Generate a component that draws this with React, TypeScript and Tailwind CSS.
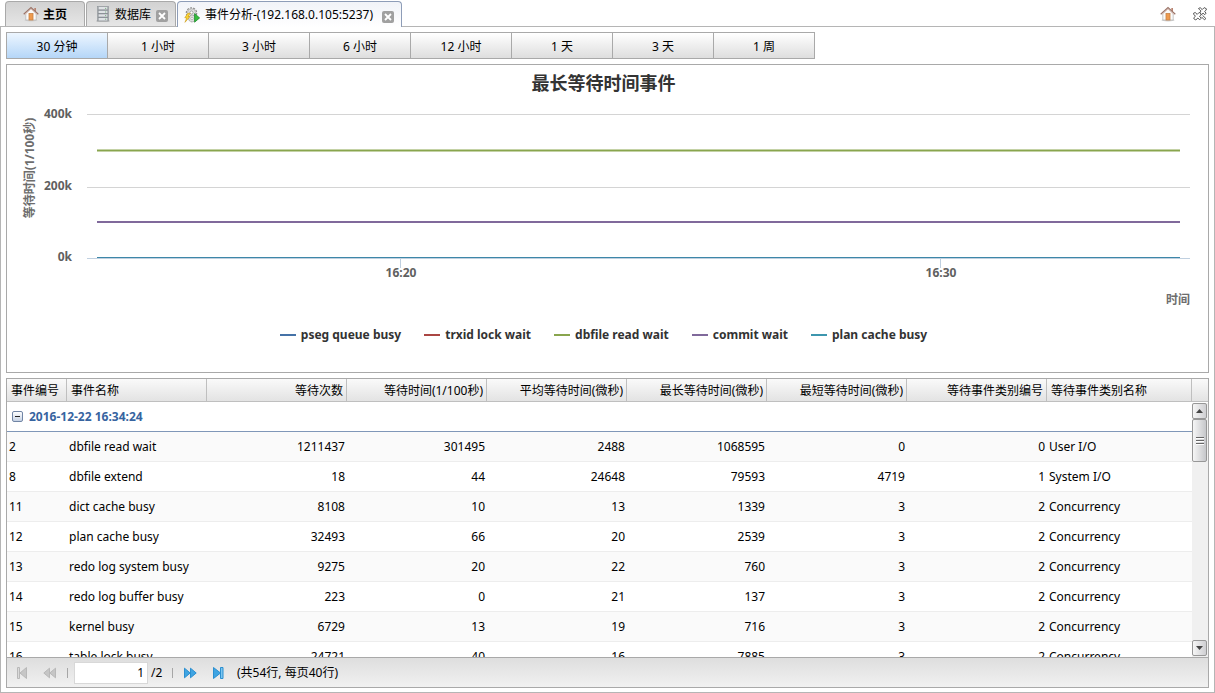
import React from "react";

type Column = { title: string; width: string; align: string };

const columns: Column[] = [
  { title: "事件编号", width: "", align: "text-left" },
  { title: "事件名称", width: "w-[140px]", align: "text-left" },
  { title: "等待次数", width: "w-[140px]", align: "text-right" },
  { title: "等待时间(1/100秒)", width: "w-[140px]", align: "text-right" },
  { title: "平均等待时间(微秒)", width: "w-[140px]", align: "text-right" },
  { title: "最长等待时间(微秒)", width: "w-[140px]", align: "text-right" },
  { title: "最短等待时间(微秒)", width: "w-[140px]", align: "text-right" },
  { title: "等待事件类别编号", width: "w-[140px]", align: "text-right" },
  { title: "等待事件类别名称", width: "w-[145px]", align: "text-left" },
];

const rows: string[][] = [
  ["2", "dbfile read wait", "1211437", "301495", "2488", "1068595", "0", "0", "User I/O"],
  ["8", "dbfile extend", "18", "44", "24648", "79593", "4719", "1", "System I/O"],
  ["11", "dict cache busy", "8108", "10", "13", "1339", "3", "2", "Concurrency"],
  ["12", "plan cache busy", "32493", "66", "20", "2539", "3", "2", "Concurrency"],
  ["13", "redo log system busy", "9275", "20", "22", "760", "3", "2", "Concurrency"],
  ["14", "redo log buffer busy", "223", "0", "21", "137", "3", "2", "Concurrency"],
  ["15", "kernel busy", "6729", "13", "19", "716", "3", "2", "Concurrency"],
  ["16", "table lock busy", "24721", "40", "16", "7885", "3", "2", "Concurrency"],
];

const ranges = ["30 分钟", "1 小时", "3 小时", "6 小时", "12 小时", "1 天", "3 天", "1 周"];

const series = [
  { name: "pseg queue busy", color: "bg-[#4572a7]" },
  { name: "trxid lock wait", color: "bg-[#aa4643]" },
  { name: "dbfile read wait", color: "bg-[#89a54e]" },
  { name: "commit wait", color: "bg-[#80699b]" },
  { name: "plan cache busy", color: "bg-[#3d96ae]" },
];

function HomeIcon() {
  return (
    <svg width="16" height="16" viewBox="0 0 16 16" aria-hidden="true">
      <ellipse cx="8" cy="14.2" rx="6.5" ry="1.2" fill="#d0d0d0" />
      <path d="M11.3 2h1.7v4l-1.7-1.6z" fill="#b98370" />
      <path d="M2.8 7.5 8 2.8l5.2 4.7V14H2.8z" fill="#fafafa" stroke="#b9b9b9" strokeWidth=".8" />
      <path d="M.7 8.2 8 1.5l7.3 6.7" fill="none" stroke="#9b7468" strokeWidth="1.2" />
      <path d="M2 8.4 8 3l6 5.4" fill="none" stroke="#e2c1b6" strokeWidth=".8" />
      <rect x="6" y="7.5" width="4" height="6.5" fill="#ef9a4e" stroke="#c98347" strokeWidth=".8" />
    </svg>
  );
}

function DatabaseIcon() {
  return (
    <svg width="16" height="16" viewBox="0 0 16 16" aria-hidden="true">
      <ellipse cx="8" cy="15" rx="7" ry="1" fill="#bdbdbd" />
      <rect x="2.5" y=".5" width="11" height="14.5" fill="#b0b4b8" stroke="#92979c" strokeWidth=".7" />
      <g fill="#dfe2e5">
        <rect x="4" y="1" width="8" height="2.6" />
        <rect x="4" y="4.6" width="8" height="2.6" />
        <rect x="4" y="8.2" width="8" height="2.6" />
        <rect x="4" y="11.8" width="8" height="2.6" />
      </g>
      <path d="M3 4.1h10M3 7.7h10M3 11.3h10" stroke="#7c8389" strokeWidth=".9" />
      <path d="M10 2.4h1.2M10 6h1.2M10 9.6h1.2M10 13.2h1.2" stroke="#7fb686" />
    </svg>
  );
}

function AnalysisIcon() {
  return (
    <svg width="16" height="16" viewBox="0 0 16 16" aria-hidden="true">
      <circle cx="7.5" cy="6" r="5.2" fill="#d9d9d9" stroke="#8f8f8f" strokeWidth="1.2" strokeDasharray="2 1.2" />
      <circle cx="7.5" cy="6" r="4" fill="#e6e6e6" stroke="#a8a8a8" strokeWidth=".6" />
      <circle cx="7.5" cy="5.5" r="1.6" fill="#fff" stroke="#8d8d8d" strokeWidth=".8" />
      <circle cx="8" cy="11.5" r="3.4" fill="#ddd" stroke="#8f8f8f" strokeDasharray="1.4 .9" />
      <circle cx="8" cy="11.5" r="1.2" fill="#fff" stroke="#999" strokeWidth=".6" />
      <path d="M3.8 6.3.8 10.8h2L1 15.3l5-5.8H4L6.2 6.3z" fill="#ffd930" stroke="#cfa023" strokeWidth=".7" />
      <path d="M10.6 6.6v8.6l5-4.3z" fill="#35bd3c" stroke="#1c8a2b" strokeWidth=".8" />
    </svg>
  );
}

function CloseButton({ label }: { label: string }) {
  return (
    <button type="button" aria-label={label} className="mt-1 ml-px flex size-3 items-center justify-center rounded-xs bg-[#a0a0a0]">
      <svg width="8" height="8" viewBox="0 0 8 8" aria-hidden="true">
        <path d="m1 1 6 6M7 1 1 7" stroke="#fff" strokeWidth="1.8" />
      </svg>
    </button>
  );
}

function Chart() {
  return (
    <section className="flex h-[309px] shrink-0 flex-col border border-[#a9a9a9] bg-white">
      <h2 className="pt-1 pr-2 text-center text-lg leading-7 font-bold text-[#333]">最长等待时间事件</h2>
      <svg viewBox="0 0 1201 210" className="w-full" role="img" aria-label="最长等待时间事件" fontWeight="700" fontSize="12" fill="#606060">
        <g stroke="#d4d4d4" shapeRendering="crispEdges">
          <path d="M80 17.5h1103M80 90.5h1103" />
          <path d="M80 161.5h1103M393.5 162v9M933.5 162v9" stroke="#c0d0e0" />
        </g>
        <path d="M90 53.5h1083" stroke="#89a54e" strokeWidth="2" />
        <path d="M90 125h1083" stroke="#80699b" strokeWidth="2" />
        <path d="M90 160.5h1083" stroke="#3d87a8" />
        <g textAnchor="end">
          <text x="65" y="21">400k</text>
          <text x="65" y="93">200k</text>
          <text x="65" y="164">0k</text>
        </g>
        <g textAnchor="middle">
          <text x="394" y="180">16:20</text>
          <text x="934" y="180">16:30</text>
        </g>
        <text x="1183" y="207" textAnchor="end" fill="#6d6d6d">时间</text>
        <text transform="translate(27 71) rotate(-90)" textAnchor="middle" fill="#6d6d6d">
          等待时间(1/100秒)
        </text>
      </svg>
      <ul className="mt-4 flex justify-center gap-[23px] pr-2 leading-6 font-bold text-[#333]">
        {series.map((s) => (
          <li key={s.name} className="flex items-center gap-[5px] whitespace-nowrap">
            <span className={`h-0.5 w-4 ${s.color}`} />
            {s.name}
          </li>
        ))}
      </ul>
    </section>
  );
}

function ScrollBar() {
  const button =
    "flex h-4 shrink-0 items-center justify-center rounded-xs border border-[#979797] bg-linear-to-r from-[#f6f6f6] to-[#cfcfd2]";
  return (
    <div className="absolute top-6 right-0 bottom-0 flex w-4 flex-col bg-[#f0f0f0] pr-px pb-px">
      <button type="button" aria-label="向上滚动" className={button}>
        <svg width="7" height="4" viewBox="0 0 7 4" aria-hidden="true"><path d="M0 4 3.5 0 7 4z" fill="#444" /></svg>
      </button>
      <div className="flex h-[43px] flex-col items-center justify-center gap-px rounded-xs border border-[#979797] bg-linear-to-r from-[#f6f6f6] to-[#c6c7ca]">
        <span className="h-0.5 w-2 border-b border-white bg-[#666]" />
        <span className="h-0.5 w-2 border-b border-white bg-[#666]" />
        <span className="h-0.5 w-2 border-b border-white bg-[#666]" />
      </div>
      <div className="grow" />
      <button type="button" aria-label="向下滚动" className={button}>
        <svg width="7" height="4" viewBox="0 0 7 4" aria-hidden="true"><path d="M0 0 3.5 4 7 0z" fill="#444" /></svg>
      </button>
    </div>
  );
}

function PagerIcon({ d, active, bar }: { d: string; active: boolean; bar?: string }) {
  const stroke = active ? "#2b8fd0" : "#b8b8b8";
  return (
    <svg width="14" height="14" viewBox="0 0 14 14" aria-hidden="true">
      <path d={d} fill={active ? "#3fa4e2" : "#c6c6c6"} stroke={stroke} strokeLinejoin="round" />
      {bar && <path d={bar} fill={active ? "#7cc6f0" : "#dadada"} stroke={stroke} />}
    </svg>
  );
}

function Pager() {
  return (
    <nav aria-label="分页" className="flex h-[30px] shrink-0 items-center border-t border-[#a9a9a9] bg-linear-to-b from-[#dedede] to-[#f1f1f1] pl-2">
      <button type="button" aria-label="第一页" disabled>
        <PagerIcon active={false} d="M11.5 1.5v11L5 7z" bar="M2.5 1.5h2v11h-2z" />
      </button>
      <button type="button" aria-label="上一页" disabled className="ml-3.5">
        <PagerIcon active={false} d="M6.5 2.2v9.6L.8 7zM12.5 2.2v9.6L6.8 7z" />
      </button>
      <span className="ml-2.5 h-2.5 w-px bg-[#a6a6a6]" />
      <input
        aria-label="页码"
        defaultValue="1"
        className="ml-1.5 h-[22px] w-[74px] border border-[#d8d8d8] bg-white pr-[3px] text-right outline-none"
      />
      <span className="ml-[3px] w-[21px]">/2</span>
      <span className="h-2.5 w-px bg-[#a6a6a6]" />
      <button type="button" aria-label="下一页" className="ml-2.5">
        <PagerIcon active d="M1.5 2.2v9.6L7.2 7zM7.5 2.2v9.6L13.2 7z" />
      </button>
      <button type="button" aria-label="最后一页" className="ml-3.5">
        <PagerIcon active d="M2.5 1.5v11L9.5 7z" bar="M9.5 1.5h2.5v11H9.5z" />
      </button>
      <span className="ml-3">(共54行, 每页40行)</span>
    </nav>
  );
}

export default function App() {
  const tab = "flex h-[25px] items-center rounded-t border border-b-0 border-[#a9a9a9] bg-linear-to-b from-[#d2d2d2] to-[#e6e6e6]";
  return (
    <div className="flex h-screen flex-col bg-white font-['Noto_Sans','Noto_Sans_CJK_SC',sans-serif] text-[12px] leading-4 text-black">
      <header className="flex h-[26px] shrink-0 items-end gap-px pl-[5px]">
        <div className={`${tab} w-[80px] justify-center gap-1 font-bold`}>
          <HomeIcon />
          <button type="button" className="pt-0.5">主页</button>
        </div>
        <div className={`${tab} w-[90px] gap-1 pl-2`}>
          <DatabaseIcon />
          <button type="button" className="pt-0.5">数据库</button>
          <CloseButton label="关闭数据库" />
        </div>
        <div className="relative -mb-px flex h-[26px] w-[225px] items-center gap-[5px] rounded-t border border-b-0 border-[#8e9db8] bg-linear-to-b from-[#f1f3f8] to-white pl-1.5 whitespace-nowrap">
          <AnalysisIcon />
          <button type="button" aria-current="page" className="pr-[3px]">事件分析-(192.168.0.105:5237)</button>
          <CloseButton label="关闭事件分析" />
        </div>
        <div className="ml-auto flex items-center gap-4 self-center pt-0.5 pr-[7px]">
          <button type="button" aria-label="主页"><HomeIcon /></button>
          <button type="button" aria-label="全部关闭">
            <svg width="16" height="16" viewBox="0 0 16 16" aria-hidden="true">
              <g fill="#fff" stroke="#555" strokeWidth="1" strokeLinejoin="round">
                <path d="m6.5 2.5 1.7-.8 2 1.9 2-2 2.3 1.3-.5 1.4-1.4 1.2 1.5 1.6-1.3 1.6-1.7-1.5-1.6 1.3-1.7-1.2.3-1.4 1-.7-1.6-1.5z" />
                <path d="m1.5 7.3 1.7-.8 2 1.9 2-2 2 1.5-.4 1.3-1.3 1.1 1.7 1.9-1.4 1.6-2-1.8-2 2-2-1.3.4-1.4 1.3-1.2-1.8-1.6z" />
                <path d="m10.5 9.3 3.4 3.3-1.5 1.2-3-3" />
              </g>
            </svg>
          </button>
        </div>
      </header>

      <main className="flex min-h-0 grow flex-col border border-[#b5b5b5] p-[5px] pb-1">
        <div className="flex h-[27px] w-[809px] shrink-0 border border-[#a9a9a9]">
          {ranges.map((r, i) => (
            <button
              key={r}
              type="button"
              aria-pressed={i === 0}
              className={
                i === 0
                  ? "flex-1 border-r border-[#a9a9a9] bg-linear-to-b from-[#edf6ff] to-[#b5d6f7] pt-0.5"
                  : "flex-1 border-r border-[#a9a9a9] bg-linear-to-b from-white to-[#dedede] pt-0.5 last:border-r-0"
              }
            >
              {r}
            </button>
          ))}
        </div>

        <div className="mt-[5px] flex min-h-0 grow flex-col gap-[5px]">
          <Chart />
          <section className="flex min-h-0 grow flex-col border border-[#a9a9a9]">
            <div className="relative min-h-0 grow overflow-hidden">
              <table className="w-full table-fixed border-separate border-spacing-0">
                <thead>
                  <tr className="h-[23px]">
                    {columns.map((c) => (
                      <th
                        key={c.title}
                        className={`${c.width} ${c.align} border-r border-b border-[#bfbfbf] bg-linear-to-b from-[#fafafa] to-[#e3e3e3] pt-0.5 pr-[3px] pb-0 pl-1 font-normal whitespace-nowrap`}
                      >
                        {c.title}
                      </th>
                    ))}
                    <td className="w-4 border-b border-[#bfbfbf] bg-linear-to-b from-[#fafafa] to-[#e3e3e3]" />
                  </tr>
                </thead>
                <tbody>
                  <tr className="h-[30px]">
                    <th colSpan={10} className="border-b border-[#8097b8] px-[5px] text-left font-bold text-[#3764a0]">
                      <div className="flex items-center gap-1.5">
                        <button type="button" aria-label="折叠" className="flex size-[11px] items-center justify-center rounded-xs border border-[#7185a5] bg-linear-to-b from-white to-[#c6d2e4]">
                          <span className="h-px w-[5px] bg-[#222]" />
                        </button>
                        2016-12-22 16:34:24
                      </div>
                    </th>
                  </tr>
                  {rows.map((row) => (
                    <tr key={row[0]} className="h-[30px] odd:bg-white even:bg-[#fafafa]">
                      {row.map((cell, i) => (
                        <td key={i} className={`${columns[i].align} border-b border-[#ededed] px-0.5 whitespace-nowrap`}>
                          {cell}
                        </td>
                      ))}
                      <td className="border-b border-[#ededed]" />
                    </tr>
                  ))}
                </tbody>
              </table>
              <ScrollBar />
            </div>
            <Pager />
          </section>
        </div>
      </main>
    </div>
  );
}
